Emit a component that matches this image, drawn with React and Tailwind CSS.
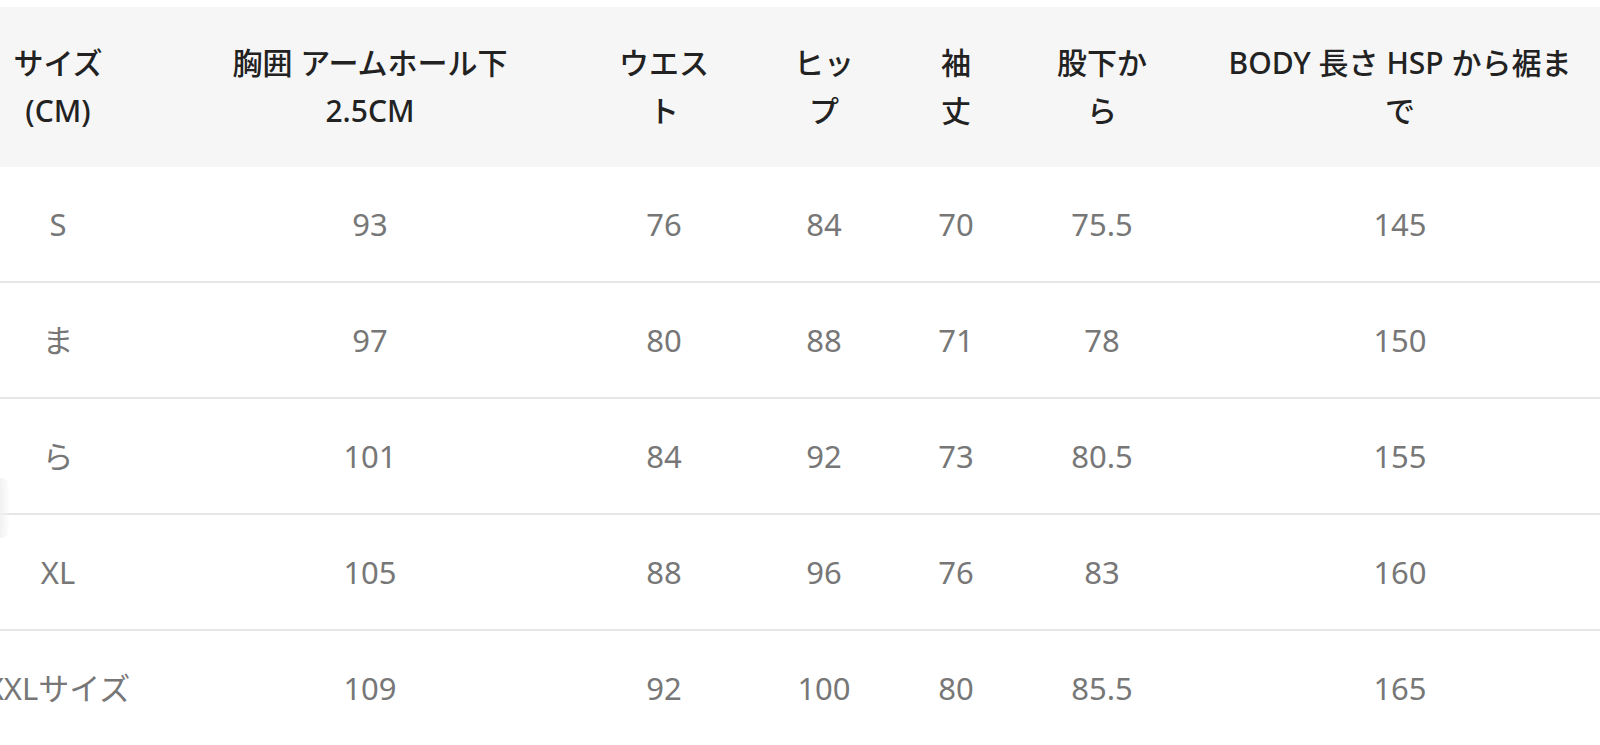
import React from 'react';

const headers = [
  ['サイズ', '(CM)'],
  ['胸囲 アームホール下', '2.5CM'],
  ['ウエス', 'ト'],
  ['ヒッ', 'プ'],
  ['袖', '丈'],
  ['股下か', 'ら'],
  ['BODY 長さ HSP から裾ま', 'で'],
];

const rows = [
  ['S', '93', '76', '84', '70', '75.5', '145'],
  ['ま', '97', '80', '88', '71', '78', '150'],
  ['ら', '101', '84', '92', '73', '80.5', '155'],
  ['XL', '105', '88', '96', '76', '83', '160'],
  ['XXLサイズ', '109', '92', '100', '80', '85.5', '165'],
];

const App = () => {
  return (
    <div
      className="relative w-[1600px] h-[745px] overflow-hidden bg-white"
      style={{ fontFamily: '"Noto Sans", "Noto Sans CJK JP", sans-serif' }}
    >
      <div className="pt-[7px]">
        <table className="table-fixed w-[1644px] ml-[-40px] border-collapse">
          <colgroup>
            <col className="w-[196px]" />
            <col className="w-[428px]" />
            <col className="w-[160px]" />
            <col className="w-[160px]" />
            <col className="w-[104px]" />
            <col className="w-[188px]" />
            <col className="w-[408px]" />
          </colgroup>
          <thead>
            <tr className="bg-[#f6f6f6] h-[160px]">
              {headers.map((h, i) => (
                <th
                  key={i}
                  className="text-center align-middle whitespace-nowrap text-[30px] leading-[48px] font-medium text-[#222]"
                >
                  {h[0]}
                  <br />
                  {h[1]}
                </th>
              ))}
            </tr>
          </thead>
          <tbody>
            {rows.map((r, ri) => (
              <tr
                key={ri}
                className={ri === 0 ? 'h-[115px]' : 'h-[116px] border-t-2 border-[#e6e6e6]'}
              >
                {r.map((c, ci) => (
                  <td
                    key={ci}
                    className="text-center align-middle whitespace-nowrap text-[31px] text-[#777]"
                  >
                    {c}
                  </td>
                ))}
              </tr>
            ))}
          </tbody>
        </table>
      </div>

      {/* faint scroll shadow on the left edge */}
      <div className="absolute left-0 top-[478px] w-[10px] h-[60px] rounded-r-full bg-gradient-to-r from-[#f1f1f1] to-transparent" />
    </div>
  );
};

export default App;
